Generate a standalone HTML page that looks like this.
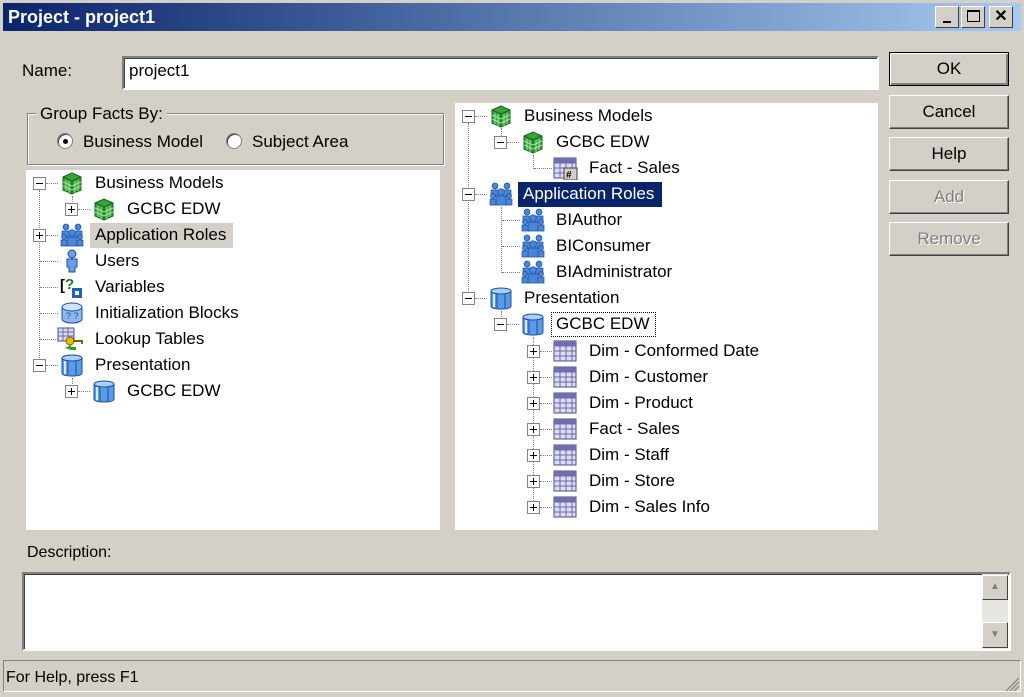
<!DOCTYPE html>
<html><head><meta charset="utf-8"><style>
*{margin:0;padding:0;box-sizing:border-box}
body{width:1024px;height:697px;background:#d4d0c8;font-family:"Liberation Sans",sans-serif;color:#000;position:relative;overflow:hidden}
.a{position:absolute}
.t{position:absolute;font-size:17px;line-height:22px;white-space:nowrap}
.bx{position:absolute;width:13px;height:13px;border:1px solid #848284;background:#fff}
.bx:before{content:"";position:absolute;left:2px;top:5px;width:7px;height:1px;background:#000}
.bx.p:after{content:"";position:absolute;left:5px;top:2px;width:1px;height:7px;background:#000}
.h{position:absolute;height:0;border-top:1px dotted #808080}
.v{position:absolute;width:0;border-left:1px dotted #808080}
.ic{position:absolute;width:26px;height:24px}
.btn{position:absolute;left:889px;width:120px;height:34px;background:#d4d0c8;border:1px solid;border-color:#fff #404040 #404040 #fff;box-shadow:inset -1px -1px #808080;font-size:17px;text-align:center;line-height:31px}
.dis{color:#808080;text-shadow:1px 1px #fff}
.wb{position:absolute;top:6px;width:24px;height:22px;background:#d4d0c8;border:1px solid;border-color:#fff #404040 #404040 #fff;font-weight:bold;text-align:center;font-size:16px;line-height:20px}
.sunk{border:2px solid;border-color:#808080 #fff #fff #808080;box-shadow:inset 1px 1px #404040}
</style></head><body>
<svg width="0" height="0" style="position:absolute">
<defs>
<symbol id="cube" viewBox="0 0 26 24"><path d="M4 6L13 2L22 6L22 19L13 23L4 19Z" fill="#39a439" stroke="#17601a"/><path d="M4 6L13 10L22 6M13 10V23" stroke="#17601a" fill="none"/><path d="M7 9V20M10 10V22M16 10V22M19 9V20M4 11L13 15L22 11M4 15L13 19L22 15" stroke="#b8f0b0" fill="none" stroke-width=".8"/></symbol>
<symbol id="ppl" viewBox="0 0 26 24"><g fill="#4a86d8" stroke="#1f4f9f" stroke-width=".7"><circle cx="7" cy="4" r="3"/><circle cx="19" cy="4" r="3"/><path d="M3 8h8v7H3z M15 8h8v7h-8z"/><circle cx="13" cy="10" r="3.3"/><path d="M8 14h10v9H8z"/><circle cx="5" cy="14" r="2.5"/><circle cx="21" cy="14" r="2.5"/><path d="M2 17h6v6H2zM18 17h6v6h-6z"/></g></symbol>
<symbol id="cyl" viewBox="0 0 26 24"><g fill="#5a9ae6" stroke="#1c4f9a"><path d="M3 5v15c0 2 4 3 10 3s10-1 10-3V5"/><ellipse cx="13" cy="5" rx="10" ry="3" fill="#a8d0ff"/></g><path d="M9 8v14M17 8v14" stroke="#1c4f9a" fill="none"/><path d="M6 8v13" stroke="#d8ecff" stroke-width="2"/></symbol>
<symbol id="grid" viewBox="0 0 26 24"><rect x="2" y="2" width="22" height="20" fill="#dcdcf4" stroke="#4a4a8a"/><rect x="2" y="2" width="22" height="5" fill="#7070b0"/><path d="M2 7H24M2 12H24M2 17H24M8 2V22M14 2V22M20 2V22" stroke="#6a6aa8" fill="none"/></symbol>
</defs></svg>

<!-- title bar -->
<div class="a" style="left:3px;top:3px;width:1018px;height:28px;background:linear-gradient(90deg,#0a246a,#a6caf0)"></div>
<div class="a" style="left:8px;top:5px;color:#fff;font-weight:bold;font-size:18px;line-height:24px">Project - project1</div>
<div class="wb" style="left:935px"><span style="display:block;margin:14px 0 0 7px;width:8px;height:2px;background:#000"></span></div>
<div class="wb" style="left:961px"><span style="display:block;margin:3px 0 0 5px;width:13px;height:12px;border:1px solid #000;border-top-width:2px"></span></div>
<div class="wb" style="left:989px">✕</div>

<!-- name -->
<div class="t" style="left:22px;top:60px">Name:</div>
<div class="a sunk" style="left:122px;top:56px;width:757px;height:34px;background:#fff"></div>
<div class="t" style="left:129px;top:60px">project1</div>

<!-- buttons -->
<div class="btn" style="top:52px;border:1px solid #000;box-shadow:inset 1px 1px #fff,inset -2px -2px #808080">OK</div>
<div class="btn" style="top:95px">Cancel</div>
<div class="btn" style="top:137px">Help</div>
<div class="btn dis" style="top:180px">Add</div>
<div class="btn dis" style="top:222px">Remove</div>

<!-- group box -->
<div class="a" style="left:27px;top:113px;width:417px;height:52px;border:1px solid #808080;box-shadow:1px 1px #fff,inset 1px 1px #fff"></div>
<div class="t" style="left:36px;top:103px;background:#d4d0c8;padding:0 4px">Group Facts By:</div>
<div class="a" style="left:57px;top:133px;width:16px;height:16px;border-radius:50%;background:#fff;border:1px solid #808080;box-shadow:inset 1px 1px #404040"></div>
<div class="a" style="left:63px;top:139px;width:5px;height:5px;border-radius:50%;background:#000"></div>
<div class="t" style="left:83px;top:131px">Business Model</div>
<div class="a" style="left:226px;top:133px;width:16px;height:16px;border-radius:50%;background:#fff;border:1px solid #808080;box-shadow:inset 1px 1px #404040"></div>
<div class="t" style="left:252px;top:131px">Subject Area</div>

<!-- left tree -->
<div class="a" style="left:26px;top:170px;width:414px;height:360px;background:#fff"></div>
<div class="v" style="left:39px;top:190px;height:170px"></div>
<div class="v" style="left:72px;top:196px;height:8px"></div>
<div class="v" style="left:72px;top:378px;height:8px"></div>
<div class="h" style="left:46px;top:183px;width:12px"></div>
<div class="h" style="left:78px;top:209px;width:12px"></div>
<div class="h" style="left:46px;top:235px;width:12px"></div>
<div class="h" style="left:40px;top:261px;width:18px"></div>
<div class="h" style="left:40px;top:287px;width:18px"></div>
<div class="h" style="left:40px;top:313px;width:18px"></div>
<div class="h" style="left:40px;top:339px;width:18px"></div>
<div class="h" style="left:46px;top:365px;width:12px"></div>
<div class="h" style="left:78px;top:391px;width:12px"></div>
<div class="bx" style="left:33px;top:177px"></div>
<div class="bx p" style="left:65px;top:203px"></div>
<div class="bx p" style="left:33px;top:229px"></div>
<div class="bx" style="left:33px;top:359px"></div>
<div class="bx p" style="left:65px;top:385px"></div>
<svg class="ic" style="left:59px;top:171px"><use href="#cube"/></svg>
<svg class="ic" style="left:91px;top:197px"><use href="#cube"/></svg>
<svg class="ic" style="left:59px;top:223px"><use href="#ppl"/></svg>
<svg class="ic" style="left:59px;top:249px" viewBox="0 0 26 24"><circle cx="13" cy="5" r="4" fill="#6aa0e8" stroke="#1f4f9f"/><path d="M8 10h10v8h-2v5h-6v-5H8z" fill="#6aa0e8" stroke="#1f4f9f"/></svg>
<svg class="ic" style="left:59px;top:275px" viewBox="0 0 26 24"><text x="1" y="15" font-size="15" font-family="Liberation Sans" font-weight="bold">[</text><text x="6" y="14" font-size="15" font-family="Liberation Sans" font-weight="bold" fill="#1a7a1a">?</text><rect x="13" y="13" width="10" height="10" fill="#1f5fbf"/><rect x="16" y="16" width="4" height="4" fill="#fff"/></svg>
<svg class="ic" style="left:59px;top:301px" viewBox="0 0 26 24"><path d="M3 6v12c0 2 4 4 10 4s10-2 10-4V6" fill="#8cb8ec" stroke="#1f4f9f"/><ellipse cx="13" cy="6" rx="10" ry="4" fill="#cfe4ff" stroke="#1f4f9f"/><text x="7" y="18" font-size="9" font-family="Liberation Sans" fill="#1f4f9f">? ?</text></svg>
<svg class="ic" style="left:57px;top:327px" viewBox="0 0 26 24"><rect x="1" y="1" width="16" height="13" fill="#dcdcf4" stroke="#4a4a8a"/><path d="M1 5H17M1 9H17M6 1V14M11 1V14" stroke="#6a6aa8"/><circle cx="13" cy="14" r="4" fill="#e8c000" stroke="#806000"/><path d="M16 14h9v3" stroke="#806000" stroke-width="2" fill="none"/><path d="M8 21l6-3v2h5v3h-5" fill="#2aa02a"/></svg>
<svg class="ic" style="left:59px;top:353px"><use href="#cyl"/></svg>
<svg class="ic" style="left:91px;top:379px"><use href="#cyl"/></svg>
<div class="t" style="left:95px;top:172px">Business Models</div>
<div class="t" style="left:127px;top:198px">GCBC EDW</div>
<div class="a" style="left:90px;top:223px;width:143px;height:25px;background:#d4d0c8"></div>
<div class="t" style="left:95px;top:224px">Application Roles</div>
<div class="t" style="left:95px;top:250px">Users</div>
<div class="t" style="left:95px;top:276px">Variables</div>
<div class="t" style="left:95px;top:302px">Initialization Blocks</div>
<div class="t" style="left:95px;top:328px">Lookup Tables</div>
<div class="t" style="left:95px;top:354px">Presentation</div>
<div class="t" style="left:127px;top:380px">GCBC EDW</div>

<!-- right tree -->
<div class="a" style="left:455px;top:103px;width:423px;height:427px;background:#fff"></div>
<div class="v" style="left:468px;top:123px;height:170px"></div>
<div class="v" style="left:501px;top:128px;height:8px"></div>
<div class="v" style="left:533px;top:155px;height:14px"></div>
<div class="v" style="left:501px;top:207px;height:66px"></div>
<div class="v" style="left:501px;top:311px;height:8px"></div>
<div class="v" style="left:533px;top:337px;height:164px"></div>
<div class="h" style="left:475px;top:116px;width:12px"></div>
<div class="h" style="left:507px;top:142px;width:12px"></div>
<div class="h" style="left:534px;top:168px;width:18px"></div>
<div class="h" style="left:475px;top:194px;width:12px"></div>
<div class="h" style="left:502px;top:220px;width:18px"></div>
<div class="h" style="left:502px;top:246px;width:18px"></div>
<div class="h" style="left:502px;top:272px;width:18px"></div>
<div class="h" style="left:475px;top:298px;width:12px"></div>
<div class="h" style="left:507px;top:324px;width:12px"></div>
<div class="h" style="left:540px;top:351px;width:12px"></div>
<div class="h" style="left:540px;top:377px;width:12px"></div>
<div class="h" style="left:540px;top:403px;width:12px"></div>
<div class="h" style="left:540px;top:429px;width:12px"></div>
<div class="h" style="left:540px;top:455px;width:12px"></div>
<div class="h" style="left:540px;top:481px;width:12px"></div>
<div class="h" style="left:540px;top:507px;width:12px"></div>
<div class="bx" style="left:462px;top:110px"></div>
<div class="bx" style="left:494px;top:136px"></div>
<div class="bx" style="left:462px;top:188px"></div>
<div class="bx" style="left:462px;top:292px"></div>
<div class="bx" style="left:494px;top:318px"></div>
<div class="bx p" style="left:527px;top:345px"></div>
<div class="bx p" style="left:527px;top:371px"></div>
<div class="bx p" style="left:527px;top:397px"></div>
<div class="bx p" style="left:527px;top:423px"></div>
<div class="bx p" style="left:527px;top:449px"></div>
<div class="bx p" style="left:527px;top:475px"></div>
<div class="bx p" style="left:527px;top:501px"></div>
<svg class="ic" style="left:488px;top:104px"><use href="#cube"/></svg>
<svg class="ic" style="left:520px;top:130px"><use href="#cube"/></svg>
<svg class="ic" style="left:552px;top:156px"><use href="#grid"/><rect x="12" y="12" width="13" height="12" fill="#d4d0c8" stroke="#404040"/><text x="14" y="22" font-size="10" font-weight="bold" font-family="Liberation Sans">#</text></svg>
<svg class="ic" style="left:488px;top:182px"><use href="#ppl"/></svg>
<svg class="ic" style="left:520px;top:208px"><use href="#ppl"/></svg>
<svg class="ic" style="left:520px;top:234px"><use href="#ppl"/></svg>
<svg class="ic" style="left:520px;top:260px"><use href="#ppl"/></svg>
<svg class="ic" style="left:488px;top:286px"><use href="#cyl"/></svg>
<svg class="ic" style="left:520px;top:312px"><use href="#cyl"/></svg>
<svg class="ic" style="left:552px;top:339px"><use href="#grid"/></svg>
<svg class="ic" style="left:552px;top:365px"><use href="#grid"/></svg>
<svg class="ic" style="left:552px;top:391px"><use href="#grid"/></svg>
<svg class="ic" style="left:552px;top:417px"><use href="#grid"/></svg>
<svg class="ic" style="left:552px;top:443px"><use href="#grid"/></svg>
<svg class="ic" style="left:552px;top:469px"><use href="#grid"/></svg>
<svg class="ic" style="left:552px;top:495px"><use href="#grid"/></svg>
<div class="t" style="left:524px;top:105px">Business Models</div>
<div class="t" style="left:556px;top:131px">GCBC EDW</div>
<div class="t" style="left:589px;top:157px">Fact - Sales</div>
<div class="a" style="left:518px;top:182px;width:144px;height:25px;background:#0a246a"></div>
<div class="t" style="left:523px;top:183px;color:#fff">Application Roles</div>
<div class="t" style="left:556px;top:209px">BIAuthor</div>
<div class="t" style="left:556px;top:235px">BIConsumer</div>
<div class="t" style="left:556px;top:261px">BIAdministrator</div>
<div class="t" style="left:524px;top:287px">Presentation</div>
<div class="a" style="left:551px;top:312px;width:105px;height:25px;border:1px dotted #000"></div>
<div class="t" style="left:556px;top:313px">GCBC EDW</div>
<div class="t" style="left:589px;top:340px">Dim - Conformed Date</div>
<div class="t" style="left:589px;top:366px">Dim - Customer</div>
<div class="t" style="left:589px;top:392px">Dim - Product</div>
<div class="t" style="left:589px;top:418px">Fact - Sales</div>
<div class="t" style="left:589px;top:444px">Dim - Staff</div>
<div class="t" style="left:589px;top:470px">Dim - Store</div>
<div class="t" style="left:589px;top:496px">Dim - Sales Info</div>

<!-- description -->
<div class="t" style="left:27px;top:542px;font-size:16px">Description:</div>
<div class="a sunk" style="left:22px;top:572px;width:989px;height:79px;background:#fff"></div>
<div class="a" style="left:982px;top:574px;width:26px;height:75px;background:#e8e6e0"></div>
<div class="a" style="left:982px;top:575px;width:26px;height:25px;background:#d4d0c8;border:1px solid;border-color:#fff #404040 #404040 #fff;text-align:center;font-size:10px;line-height:22px;color:#808080">▲</div>
<div class="a" style="left:982px;top:622px;width:26px;height:26px;background:#d4d0c8;border:1px solid;border-color:#fff #404040 #404040 #fff;text-align:center;font-size:10px;line-height:24px;color:#808080">▼</div>

<!-- status bar -->
<div class="a" style="left:3px;top:660px;width:1018px;height:32px;border:1px solid;border-color:#808080 #fff #fff #808080"></div>
<div class="t" style="left:6px;top:667px;font-size:16px">For Help, press F1</div>
<svg class="a" style="left:1004px;top:676px" width="16" height="16"><path d="M15 2L2 15M15 6L6 15M15 10L10 15" stroke="#808080" stroke-width="1.2"/></svg>
</body></html>
